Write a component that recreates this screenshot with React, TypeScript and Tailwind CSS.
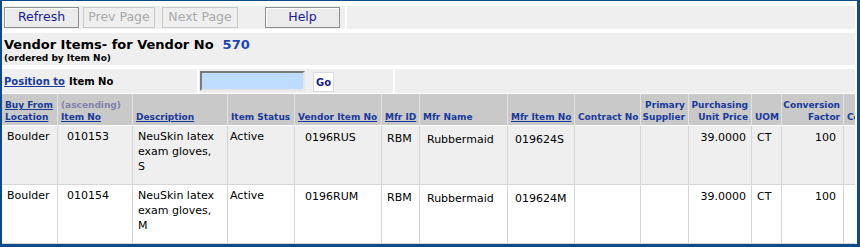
type Row = {
  cells: (string | string[])[];
  bg: string;
};

const gridCols =
  "grid grid-cols-[56px_75px_95px_67px_87px_38px_88px_67px_66px_48px_63px_30px_62px_1fr]";

const bodyCellClass = [
  "pl-[5px] pt-[3px]",
  "pl-[9px] pt-[3px]",
  "pl-[5px] pt-[3px]",
  "pl-[2px] pt-[3px]",
  "pl-[10px] pt-[4px]",
  "pl-[5px] pt-[5px]",
  "pl-[7px] pt-[6px]",
  "pl-[7px] pt-[6px]",
  "",
  "",
  "pr-[5px] pt-[4px] text-right",
  "pl-[5px] pt-[4px]",
  "pr-[7px] pt-[4px] text-right",
  "",
];

const rows: Row[] = [
  {
    bg: "bg-[#efefef]",
    cells: [
      "Boulder",
      "010153",
      ["NeuSkin latex", "exam gloves,", "S"],
      "Active",
      "0196RUS",
      "RBM",
      "Rubbermaid",
      "019624S",
      "",
      "",
      "39.0000",
      "CT",
      "100",
      "",
    ],
  },
  {
    bg: "bg-white",
    cells: [
      "Boulder",
      "010154",
      ["NeuSkin latex", "exam gloves,", "M"],
      "Active",
      "0196RUM",
      "RBM",
      "Rubbermaid",
      "019624M",
      "",
      "",
      "39.0000",
      "CT",
      "100",
      "",
    ],
  },
];

function HeadCell({
  children,
  align = "left",
  last = false,
}: {
  children: React.ReactNode;
  align?: "left" | "right";
  last?: boolean;
}) {
  return (
    <div
      className={`h-[32px] flex flex-col justify-end pb-[2px] bg-[#c9c9c9] border-b border-b-white whitespace-nowrap overflow-hidden ${
        last ? "" : "border-r border-r-[#e2e2e2]"
      } ${align === "right" ? "items-end pr-[3px]" : "items-start pl-[3px]"}`}
    >
      {children}
    </div>
  );
}

function HLink({ children }: { children: React.ReactNode }) {
  return <span className="underline text-[#17399b]">{children}</span>;
}

function ToolButton({
  label,
  width,
  disabled = false,
  className = "",
}: {
  label: string;
  width: string;
  disabled?: boolean;
  className?: string;
}) {
  return (
    <button
      className={`${width} ${className} h-[21px] flex items-center justify-center text-[12.5px] border ${
        disabled
          ? "border-[#c9c9c9] bg-[#efefef] text-[#a9a9a9]"
          : "border-[#8e8e8e] bg-[#ebebeb] text-[#1b1b93] shadow-[inset_1px_1px_0_#ffffff]"
      }`}
    >
      {label}
    </button>
  );
}

export default function App() {
  return (
    <div className="w-[860px] h-[247px] bg-[#0d4a8c] pt-px pl-[2px] pr-[3px] pb-[3px] font-['DejaVu_Sans',sans-serif]">
      <div className="h-full bg-white overflow-hidden pr-[2px] flex flex-col">
        {/* toolbar */}
        <div className="mt-[5px] h-[23px] flex gap-[2px] shrink-0">
          <div className="w-[343px] bg-[#efefef] flex items-start pt-px pl-[2px]">
            <ToolButton label="Refresh" width="w-[75px]" />
            <ToolButton label="Prev Page" width="w-[72px]" disabled className="ml-[4px]" />
            <ToolButton label="Next Page" width="w-[76px]" disabled className="ml-[7px]" />
            <ToolButton label="Help" width="w-[75px]" className="ml-[27px]" />
          </div>
          <div className="flex-1 bg-[#efefef]" />
        </div>

        {/* title */}
        <div className="mt-[4px] h-[32px] shrink-0 bg-[#efefef] pl-[2px] pt-[4px] text-black font-bold">
          <div className="text-[13px] leading-[16px] whitespace-nowrap">
            Vendor Items- for Vendor No
            <span className="ml-[9px] text-[#1c45b5]">570</span>
          </div>
          <div className="text-[9px] leading-[11px]">(ordered by Item No)</div>
        </div>

        {/* position to */}
        <div className="mt-[4px] h-[24px] shrink-0 flex gap-[2px]">
          <div className="w-[195px] bg-[#efefef] flex items-center pl-[2px] text-[10px] font-bold">
            <span className="underline text-[#17399b]">Position to</span>
            <span className="ml-[4px] text-black">Item No</span>
          </div>
          <div className="w-[194px] bg-[#efefef] flex items-start pl-px pt-[2px]">
            <div className="w-[105px] h-[20px] bg-[#bddcff] border-2 border-t-[#7a7a7a] border-l-[#7a7a7a] border-b-[#e6e6e6] border-r-[#e6e6e6]" />
            <button className="ml-[8px] mt-px w-[21px] h-[20px] bg-white border border-[#dadada] text-[10px] font-bold text-[#1b1b93] flex items-center justify-center">
              Go
            </button>
          </div>
          <div className="flex-1 bg-[#efefef]" />
        </div>

        {/* header */}
        <div className={`mt-px shrink-0 ${gridCols} text-[9px] leading-[12px] font-bold text-[#17399b]`}>
          <HeadCell>
            <HLink>Buy From</HLink>
            <HLink>Location</HLink>
          </HeadCell>
          <HeadCell>
            <span className="text-[#8282aa]">(ascending)</span>
            <HLink>Item No</HLink>
          </HeadCell>
          <HeadCell>
            <HLink>Description</HLink>
          </HeadCell>
          <HeadCell>
            <span>Item Status</span>
          </HeadCell>
          <HeadCell>
            <HLink>Vendor Item No</HLink>
          </HeadCell>
          <HeadCell>
            <HLink>Mfr ID</HLink>
          </HeadCell>
          <HeadCell>
            <span>Mfr Name</span>
          </HeadCell>
          <HeadCell>
            <HLink>Mfr Item No</HLink>
          </HeadCell>
          <HeadCell>
            <span>Contract No</span>
          </HeadCell>
          <HeadCell align="right">
            <span>Primary</span>
            <span>Supplier</span>
          </HeadCell>
          <HeadCell align="right">
            <span>Purchasing</span>
            <span>Unit Price</span>
          </HeadCell>
          <HeadCell>
            <span>UOM</span>
          </HeadCell>
          <HeadCell align="right">
            <span>Conversion</span>
            <span>Factor</span>
          </HeadCell>
          <HeadCell last>
            <span>Co</span>
          </HeadCell>
        </div>

        {/* rows */}
        <div className={`shrink-0 ${gridCols} text-[11px] leading-[15px] font-normal text-black`}>
          {rows.map((row, r) =>
            row.cells.map((cell, c) => (
              <div
                key={`${r}-${c}`}
                className={`h-[59px] border-b border-b-[#d6d6d6] overflow-hidden whitespace-nowrap ${row.bg} ${
                  c === 13 ? "" : "border-r border-r-[#d6d6d6]"
                } ${bodyCellClass[c]}`}
              >
                {Array.isArray(cell)
                  ? cell.map((line, i) => <div key={i}>{line}</div>)
                  : cell}
              </div>
            ))
          )}
        </div>
      </div>
    </div>
  );
}
